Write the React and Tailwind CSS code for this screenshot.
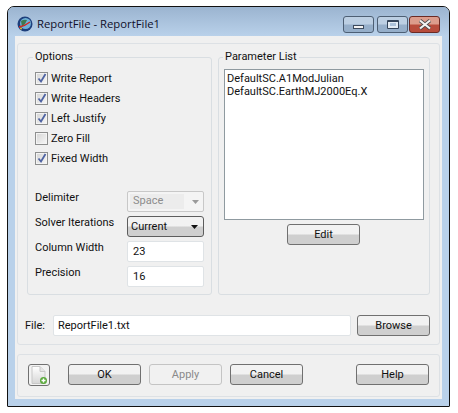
import React from 'react';

const uiFont = "font-['Roboto',sans-serif] text-[11px] leading-[14px]";

const Check = ({ checked, label }) => (
  <div className="flex items-center h-[13px]">
    <div className="relative w-[13px] h-[13px] border border-[#8e8f8f] bg-gradient-to-br from-[#d4d4d4] to-[#f8f8f8] shadow-[inset_0_0_0_1px_#f4f4f4] shrink-0">
      {checked && (
        <svg className="absolute left-[0px] top-[-1px]" width="12" height="12" viewBox="0 0 12 12">
          <path d="M2.5 6.5 L5 9.5 L9.5 2" fill="none" stroke="#4f64a3" strokeWidth="1.8" />
        </svg>
      )}
    </div>
    <span className="ml-[3px] text-[#111]">{label}</span>
  </div>
);

const Btn = ({ label, disabled, className = '' }) => (
  <button
    className={`h-[21px] rounded-[3px] border text-center ${uiFont} ${
      disabled
        ? 'border-[#c4c4c4] bg-[#f1f1f1] text-[#8a8a8a]'
        : 'border-[#707070] bg-gradient-to-b from-[#f2f2f2] from-45% to-[#cfcfcf] to-55% text-[#111]'
    } ${className}`}
  >
    {label}
  </button>
);

const Field = ({ value, className = '' }) => (
  <div className={`h-[21px] bg-white border border-[#dfe3e6] rounded-[2px] flex items-center text-[#111] ${className}`}>
    {value}
  </div>
);

const Group = ({ title, className = '', legendClass = '', children }) => (
  <fieldset className={`border border-[#d9dee2] rounded-[3px] ${className}`}>
    <legend className={`px-[2px] text-[#111] h-[14px] ${legendClass}`}>{title}</legend>
    {children}
  </fieldset>
);

const WinBtn = ({ className = '', children }) => (
  <div className={`h-[17px] w-[31px] rounded-[3px] border border-[#4d5f74] flex items-center justify-center ${className}`}>
    {children}
  </div>
);

export default function App() {
  return (
    <div className={`w-[458px] h-[413px] bg-white pl-[7px] pt-[6px] ${uiFont}`}>
      <div className="w-[443px] h-[401px] border border-[#111] rounded-t-[7px] rounded-b-[1px] bg-[#b9d1ea] flex flex-col">
        {/* title bar */}
        <div className="h-[29px] shrink-0 pl-[9px] pr-[9px] flex items-center rounded-t-[6px] bg-gradient-to-b from-[#9bb4d0] to-[#b9d1ea]">
          <svg width="16" height="16" viewBox="0 0 16 16" className="mt-[4px]">
            <circle cx="8" cy="8" r="7.5" fill="#1d3f7c" />
            <circle cx="8.5" cy="7.5" r="5.5" fill="#6fb0d8" />
            <path d="M4 5 q3 -2 6 -1 l-2 4 l-3 3 z" fill="#3f7a52" />
            <path d="M2 11 Q8 10 13 6" fill="none" stroke="#d3271f" strokeWidth="1.3" />
            <circle cx="4" cy="12.5" r="1" fill="#e6c22e" />
          </svg>
          <span className="ml-[4px] mt-[4px] font-['Open_Sans',sans-serif] text-[11.3px] text-[#10102a]">
            ReportFile - ReportFile1
          </span>
          <div className="ml-auto mt-[5px] flex">
            <WinBtn className="mr-[3px] bg-gradient-to-b from-[#bccfe3] from-45% to-[#96afca] to-55%">
              <div className="w-[11px] h-[4px] mt-[6px] bg-[#f3f3f3] border border-[#3c4a5c]" />
            </WinBtn>
            <WinBtn className="mr-[1px] bg-gradient-to-b from-[#bccfe3] from-45% to-[#96afca] to-55%">
              <div className="w-[12px] h-[9px] border border-t-[2px] border-[#35455a] rounded-[1px] bg-[#e4ecf4] flex items-center justify-center">
                <div className="w-[6px] h-[3px] bg-[#aec3da]" />
              </div>
            </WinBtn>
            <WinBtn className="border-[#6b2a24] bg-gradient-to-b from-[#dc9c8c] from-45% to-[#b84c3c] to-55%">
              <svg width="16" height="11" viewBox="0 0 16 11">
                <path d="M3 1.5 L13 9.5 M13 1.5 L3 9.5" stroke="#4a4a4a" strokeWidth="3.6" />
                <path d="M3 1.5 L13 9.5 M13 1.5 L3 9.5" stroke="#f4f4f4" strokeWidth="2.2" />
              </svg>
            </WinBtn>
          </div>
        </div>

        {/* client area */}
        <div className="flex-1 mx-[7px] mb-[7px] bg-[#f0f0f0] px-[2px] pt-[7px] pb-[1px] flex flex-col gap-[9px]">
          <div className="h-[302px] border border-[#dde1e5] rounded-[3px] px-[9px] pt-[6px] flex flex-col">
            <div className="flex gap-[6px]">
              <Group title="Options" legendClass="ml-[-2px]" className="w-[185px] h-[245px] px-[7px]">
                <div className="flex flex-col gap-[7px] mt-[8px]">
                  <Check checked label="Write Report" />
                  <Check checked label="Write Headers" />
                  <Check checked label="Left Justify" />
                  <Check label="Zero Fill" />
                  <Check checked label="Fixed Width" />
                </div>
                <div className="grid grid-cols-[92px_77px] auto-rows-[21px] gap-y-[4px] mt-[26px]">
                  <span className="text-[#111]">Delimiter</span>
                  <div className="h-[21px] border border-[#c8c8c8] rounded-[2px] bg-[#f4f4f4] pl-[2px] py-[2px] flex items-center">
                    <div className="w-[54px] h-[15px] bg-[#ececec] pl-[3px] text-[#8d8d8d]">Space</div>
                    <svg className="ml-[8px]" width="7" height="4" viewBox="0 0 7 4"><path d="M0 0h7L3.5 4z" fill="#9a9a9a" /></svg>
                  </div>
                  <span className="text-[#111]">Solver Iterations</span>
                  <div className="h-[21px] border border-[#5d5d5d] rounded-[3px] pl-[3px] flex items-center bg-gradient-to-b from-[#f2f2f2] from-45% to-[#cfcfcf] to-55% text-[#111]">
                    Current
                    <svg className="ml-auto mr-[5px]" width="7" height="4" viewBox="0 0 7 4"><path d="M0 0h7L3.5 4z" fill="#111" /></svg>
                  </div>
                  <span className="text-[#111]">Column Width</span>
                  <Field value="23" className="pl-[5px]" />
                  <span className="text-[#111]">Precision</span>
                  <Field value="16" className="pl-[5px]" />
                </div>
              </Group>
              <Group title="Parameter List" legendClass="ml-[-1px]" className="w-[213px] h-[245px] px-[5px]">
                <div className="h-[151px] bg-white border border-[#8f9aa0] pl-[2px] pt-[2px] text-[#111] mt-[5px]">
                  <div className="leading-[13px]">DefaultSC.A1ModJulian</div>
                  <div className="leading-[13px]">DefaultSC.EarthMJ2000Eq.X</div>
                </div>
                <div className="flex justify-center mt-[4px] pr-[1px]">
                  <Btn label="Edit" className="w-[73px]" />
                </div>
              </Group>
            </div>
            <div className="flex items-center mt-[20px]">
              <span className="w-[28px] ml-[-2px] text-[#111]">File:</span>
              <Field value="ReportFile1.txt" className="w-[299px] pl-[4px]" />
              <Btn label="Browse" className="w-[73px] ml-[6px]" />
            </div>
          </div>

          <div className="h-[43px] border border-[#dde1e5] rounded-[3px] pl-[10px] pb-[2px] flex items-center">
            <button className="w-[22px] h-[22px] rounded-[3px] border border-[#707070] bg-[#f2f2f2] flex items-center justify-center">
              <svg width="18" height="20" viewBox="0 0 18 20">
                <defs>
                  <linearGradient id="pg" x1="0" y1="0" x2="0" y2="1">
                    <stop offset="0" stopColor="#ffffff" />
                    <stop offset="1" stopColor="#d6d6d6" />
                  </linearGradient>
                </defs>
                <path d="M2 1.5h8l5 5v12H2z" fill="url(#pg)" stroke="#c8c8c8" />
                <path d="M10 1.5v5h5" fill="#e4e4e4" stroke="#c8c8c8" />
                <circle cx="13.5" cy="15.5" r="3.5" fill="#5aa93c" />
                <path d="M11.5 15.5h4M13.5 13.5v4" stroke="#fff" strokeWidth="1.4" />
              </svg>
            </button>
            <Btn label="OK" className="w-[73px] ml-[18px]" />
            <Btn label="Apply" disabled className="w-[73px] ml-[8px]" />
            <Btn label="Cancel" className="w-[73px] ml-[8px]" />
            <Btn label="Help" className="w-[73px] ml-[53px]" />
          </div>
        </div>
      </div>
    </div>
  );
}
